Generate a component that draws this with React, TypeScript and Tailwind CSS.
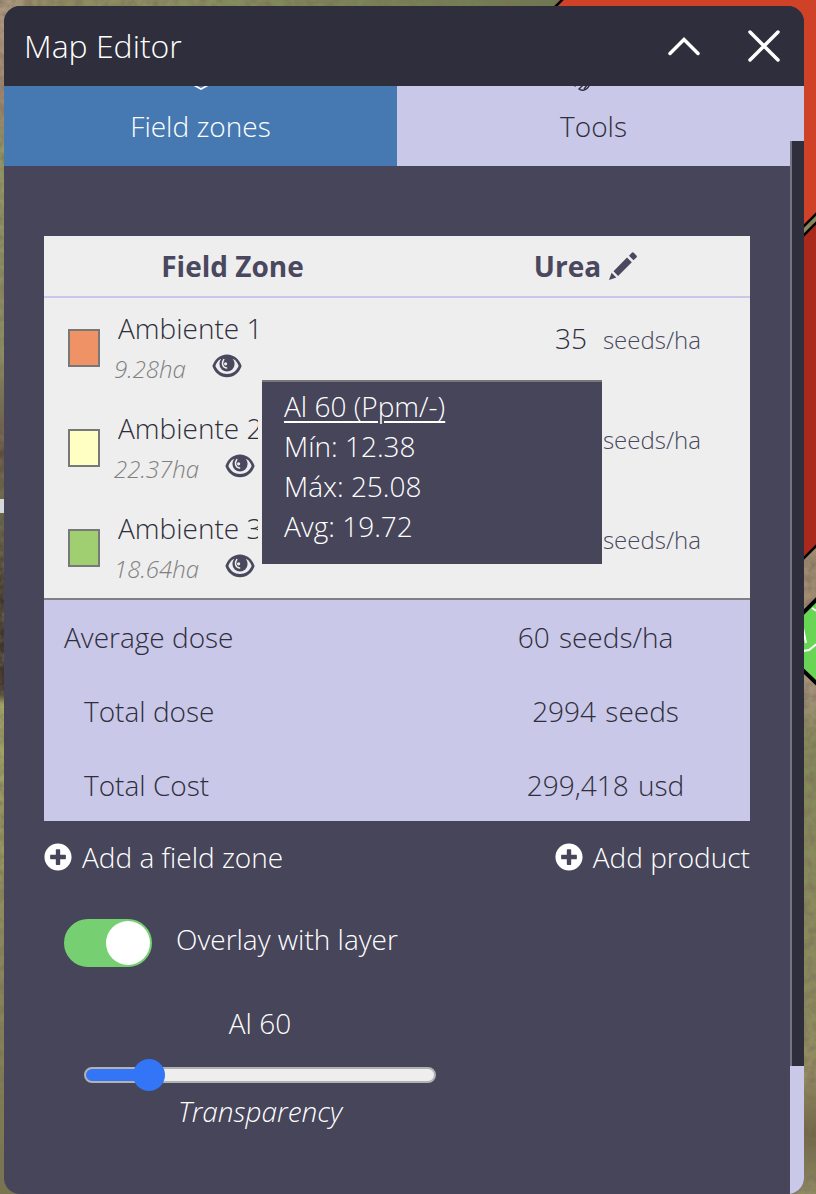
import { useState } from "react";
import { FaPlusCircle } from "react-icons/fa";

const zones = [
  { name: "Ambiente 1", area: "9.28ha", dose: "35", color: "bg-[#ef9265]" },
  { name: "Ambiente 2", area: "22.37ha", dose: "50", color: "bg-[#ffffc4]" },
  { name: "Ambiente 3", area: "18.64ha", dose: "85", color: "bg-[#9fcf70]" },
];

function MapBackdrop() {
  return (
    <svg
      className="absolute inset-0 h-full w-full"
      viewBox="0 0 816 1194"
      preserveAspectRatio="none"
      aria-hidden="true"
    >
      <defs>
        <linearGradient id="left" x1="0" y1="0" x2="0" y2="1">
          <stop offset="0" stopColor="#b09a84" />
          <stop offset="0.09" stopColor="#a08573" />
          <stop offset="0.12" stopColor="#949a66" />
          <stop offset="0.3" stopColor="#8b8a62" />
          <stop offset="0.38" stopColor="#5e4c40" />
          <stop offset="0.42" stopColor="#6a6a48" />
          <stop offset="0.5" stopColor="#40342f" />
          <stop offset="0.58" stopColor="#43352f" />
          <stop offset="0.59" stopColor="#a5a868" />
          <stop offset="0.8" stopColor="#8c8a5c" />
          <stop offset="1" stopColor="#77744e" />
        </linearGradient>
        <linearGradient id="right" x1="0" y1="0" x2="0" y2="1">
          <stop offset="0" stopColor="#8a8a60" />
          <stop offset="0.2" stopColor="#8a8a60" />
          <stop offset="0.45" stopColor="#a08b70" />
          <stop offset="0.58" stopColor="#a3917a" />
          <stop offset="0.62" stopColor="#858a5a" />
          <stop offset="0.85" stopColor="#8c8c5e" />
          <stop offset="0.9" stopColor="#948c62" />
          <stop offset="0.95" stopColor="#6f6644" />
          <stop offset="1" stopColor="#918b63" />
        </linearGradient>
        <linearGradient id="top" x1="0" y1="0" x2="1" y2="0">
          <stop offset="0" stopColor="#b09a84" />
          <stop offset="0.08" stopColor="#8e8a60" />
          <stop offset="0.25" stopColor="#8c9062" />
          <stop offset="0.5" stopColor="#7f8a57" />
          <stop offset="1" stopColor="#6b7550" />
        </linearGradient>
        <filter id="grain" x="0" y="0" width="1" height="1">
          <feTurbulence type="fractalNoise" baseFrequency="0.12" numOctaves="3" seed="4" />
          <feColorMatrix values="0 0 0 0 0.2  0 0 0 0 0.16  0 0 0 0 0.1  1.4 0 0 0 -0.45" />
        </filter>
      </defs>
      <rect width="400" height="1194" fill="url(#left)" />
      <rect x="400" width="416" height="1194" fill="url(#right)" />
      <rect width="600" height="7" fill="url(#top)" />
      <rect width="816" height="1194" filter="url(#grain)" />
      <rect y="499" width="5" height="14" fill="#d5d8dc" />
      <path d="M554 8L564-2H830V200L790 240V8Z" fill="#cf4227" stroke="#000" strokeWidth="2.500" />
      <path d="M790 249L830 209V532L790 572Z" fill="#a92a1d" stroke="#000" strokeWidth="2.500" />
      <path d="M790 626L830 586V696L790 658Z" fill="#69d555" stroke="#000" strokeWidth="4" />
      <path d="M812 608l6 4M803 628l3 15M803 651l6-1 9-7" fill="none" stroke="#fff" strokeWidth="2" />
    </svg>
  );
}

function EyeIcon() {
  return (
    <svg className="h-6 w-[30px]" viewBox="0 0 30 24" aria-hidden="true">
      <path
        fill="#49485e"
        d="M15 .5C8 .5 2.500 5.500.4 12c2.100 6.500 7.600 11.300 14.600 11.300S27.500 18.500 29.600 12C27.500 5.500 22 .5 15 .5Z"
      />
      <path fill="#eee" d="M8.300 5.200C5.800 6.900 4.200 9 3.400 12c2 5 6.400 8 11.600 8s9.600-3 11.600-8c-.8-3-2.400-5.100-4.900-6.800Z" />
      <circle cx="15" cy="9.800" r="7.600" fill="#49485e" />
      <path d="M11.800 5.500C9.600 8.500 9.900 13.200 14.600 14" fill="none" stroke="#eee" strokeWidth="1.500" strokeLinecap="round" />
      <circle cx="13.600" cy="9.800" r="1.600" fill="#eee" />
    </svg>
  );
}

function PencilIcon() {
  return (
    <svg className="h-7 w-7" viewBox="0 0 28 28" fill="#49485e" aria-hidden="true">
      <path d="M0 28l2.600-7.300 4.700 4.700ZM4.500 19.300L18 5.500l4.800 4.800L9.100 23.900ZM20 3.700l2.800-3q1-1 2 0l2.600 2.700q1 1 0 2l-2.900 2.900Z" />
    </svg>
  );
}

export default function App() {
  const [overlay, setOverlay] = useState(true);
  const [level, setLevel] = useState(15);
  const fill = `calc(16px + (100% - 32px) * ${level / 100})`;

  return (
    <div className="relative flex min-h-screen flex-col pt-1.5 pr-3 pl-1 font-['Open_Sans',sans-serif] text-[28px] leading-10 font-light text-white">
      <MapBackdrop />
      <section className="relative flex grow flex-col overflow-hidden rounded-2xl bg-[#46455a]">
        <header className="flex h-20 shrink-0 items-center justify-between bg-[#2f2e3c] pr-6 pl-5">
          <h1 className="text-[32px]">Map Editor</h1>
          <div className="flex gap-12">
            <button aria-label="Collapse" className="h-8 w-8">
              <svg viewBox="0 0 32 32" fill="none" stroke="#fff" strokeWidth="3.500" strokeLinecap="round">
                <path d="M2 23.500L16 9.500l14 14" strokeLinejoin="miter" />
              </svg>
            </button>
            <button aria-label="Close" className="h-8 w-8">
              <svg viewBox="0 0 32 32" fill="none" stroke="#fff" strokeWidth="3.500" strokeLinecap="round">
                <path d="M2 2l28 28M30 2L2 30" />
              </svg>
            </button>
          </div>
        </header>

        <div className="flex grow">
          <div className="min-w-0 grow">
            <nav className="grid h-20 grid-cols-2">
              <button className="flex h-20 flex-col items-center justify-end gap-4 overflow-hidden bg-[#4679b2] pb-5">
                <svg className="h-8 w-8 shrink-0" viewBox="0 0 32 32" fill="none" stroke="#fff" strokeWidth="1.600" aria-hidden="true">
                  <path d="M16 3L2 11l14 8 14-8ZM2 17l14 8 14-8M2 23.500l14 7.500 14-7.500" />
                </svg>
                <span>Field zones</span>
              </button>
              <button className="flex h-20 flex-col items-center justify-end gap-4 overflow-hidden bg-[#c9c8e8] pb-5 text-[#2f2e3c]">
                <svg className="h-8 w-8 shrink-0 overflow-visible" viewBox="0 0 32 32" fill="none" stroke="#2f2e3c" strokeWidth="1.400" aria-hidden="true">
                  <path d="M13 22L24 9l4 3-12 13M-3.500 28.500l1.500-1.500M6 26L1 31c2 2 6 1.500 8-.5 1.500-1.500 2.500-3 2.500-4.500M6 31l4-5" />
                </svg>
                <span>Tools</span>
              </button>
            </nav>

            <main className="px-10 pt-[70px]">
              <div className="relative">
                <table className="w-full table-fixed border-separate border-spacing-0 bg-[#eee] text-[#2f2e3c]">
                  <colgroup>
                    <col className="w-[53.4%]" />
                    <col />
                  </colgroup>
                  <thead>
                    <tr className="h-[62px] text-[#49485e]">
                      <th className="border-b-2 border-[#c9c8e8] p-0 font-bold">Field Zone</th>
                      <th className="border-b-2 border-[#c9c8e8] p-0 font-bold">
                        <span className="flex items-center justify-center gap-2">
                          Urea
                          <button aria-label="Edit Urea">
                            <PencilIcon />
                          </button>
                        </span>
                      </th>
                    </tr>
                  </thead>
                  <tbody>
                    {zones.map((zone) => (
                      <tr key={zone.name} className="h-[100px]">
                        <td className="p-0 pl-6">
                          <div className="flex items-center gap-3.5">
                            <button
                              aria-label={`${zone.name} color`}
                              className={`h-[38px] w-8 border-2 border-[#787878] ${zone.color}`}
                            />
                            <div className="pt-0.5">
                              <input
                                aria-label="Zone name"
                                defaultValue={zone.name}
                                className="ml-1 block h-10 w-[140px] bg-transparent"
                              />
                              <div className="flex h-[42px] items-center gap-[26px]">
                                <span className="text-2xl leading-10 text-[#808080] italic">{zone.area}</span>
                                <button aria-label={`Show ${zone.name}`} className="-mt-1.5">
                                  <EyeIcon />
                                </button>
                              </div>
                            </div>
                          </div>
                        </td>
                        <td className="p-0">
                          <div className="-mt-5 flex items-baseline justify-end gap-4 pr-[49px]">
                            <input
                              aria-label={`${zone.name} dose`}
                              defaultValue={zone.dose}
                              className="h-10 w-16 bg-transparent text-right"
                            />
                            <span className="text-2xl text-[#49485e]">seeds/ha</span>
                          </div>
                        </td>
                      </tr>
                    ))}
                  </tbody>
                  <tfoot className="bg-[#c9c8e8]">
                    <tr className="h-[76px]">
                      <td className="border-t-2 border-[#808080] p-0 pl-5">Average dose</td>
                      <td className="border-t-2 border-[#808080] p-0 pl-5 text-center">
                        60 <span className="ml-0.5">seeds/ha</span>
                      </td>
                    </tr>
                    <tr className="h-[74px]">
                      <td className="p-0 pl-10">Total dose</td>
                      <td className="p-0 pl-10 text-center">
                        2994 <span className="ml-0.5">seeds</span>
                      </td>
                    </tr>
                    <tr className="h-[73px]">
                      <td className="p-0 pl-10">Total Cost</td>
                      <td className="p-0 pl-10 text-center">
                        299,418 <span className="ml-0.5">usd</span>
                      </td>
                    </tr>
                  </tfoot>
                </table>

                <div
                  role="tooltip"
                  className="absolute top-36 left-[218px] w-[340px] border-t-2 border-[#787878] bg-[#46455a] px-[22px] pt-1 pb-[18px]"
                >
                  <p className="underline decoration-2 underline-offset-4">Al 60 (Ppm/-)</p>
                  <p>Mín: 12.38</p>
                  <p>Máx: 25.08</p>
                  <p>Avg: 19.72</p>
                </div>
              </div>

              <div className="mt-4 flex justify-between">
                <button className="flex items-center gap-2.5">
                  <FaPlusCircle className="h-7 w-7" />
                  Add a field zone
                </button>
                <button className="flex items-center gap-2.5">
                  <FaPlusCircle className="h-7 w-7" />
                  Add product
                </button>
              </div>

              <label className="mt-[42px] ml-5 flex w-fit items-start gap-6">
                <input
                  type="checkbox"
                  checked={overlay}
                  onChange={(event) => setOverlay(event.target.checked)}
                  className="flex h-12 w-[88px] appearance-none items-center rounded-full border-2 border-[#76d072] bg-[#8a8a99] before:h-11 before:w-11 before:rounded-full before:bg-white checked:justify-end checked:bg-[#76d072]"
                />
                <span>Overlay with layer</span>
              </label>

              <div className="mt-9 ml-10 flex w-[352px] flex-col items-center">
                <p>Al 60</p>
                <input
                  id="transparency"
                  type="range"
                  value={level}
                  onChange={(event) => setLevel(Number(event.target.value))}
                  className="mt-6 h-4 w-full appearance-none rounded-full border-2 border-[#b2b2b2] [&::-webkit-slider-thumb]:h-8 [&::-webkit-slider-thumb]:w-8 [&::-webkit-slider-thumb]:appearance-none [&::-webkit-slider-thumb]:rounded-full [&::-webkit-slider-thumb]:bg-[#3275f7]"
                  style={{ background: `linear-gradient(to right, #3275f7 ${fill}, #eee ${fill}) border-box` }}
                />
                <label htmlFor="transparency" className="mt-2 italic">
                  Transparency
                </label>
              </div>
            </main>
          </div>

          <div className="flex w-3.5 shrink-0 flex-col bg-[#c9c8e8] pt-[55px] pb-32" aria-hidden="true">
            <div className="grow border-l-2 border-[#757482] bg-[#2f2e3c]" />
          </div>
        </div>
      </section>
    </div>
  );
}
